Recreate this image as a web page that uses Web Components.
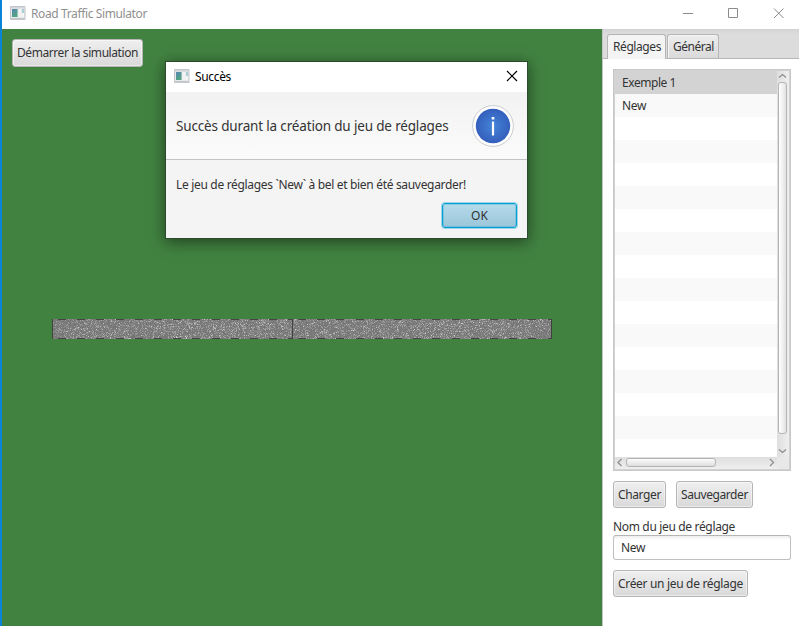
<!DOCTYPE html>
<html lang="fr">
<head>
<meta charset="utf-8">
<title>Road Traffic Simulator</title>
<style>
html,body{margin:0;width:799px;height:626px;overflow:hidden;background:#fff;font:12px/16px "Noto Sans","Open Sans",sans-serif;color:#333}
</style>
</head>
<body>
<traffic-app></traffic-app>
<script>
const define=(name,html,setup)=>customElements.define(name,class extends HTMLElement{
  connectedCallback(){
    if(this.shadowRoot)return;
    const t=document.createElement('template');
    t.innerHTML=html;
    this.attachShadow({mode:'open'}).append(t.content.cloneNode(true));
    if(setup)setup(this,this.shadowRoot);
  }
});

// Single-line label whose tracking is adjusted to fill the width given in "w".
define('fit-text','<style>:host{display:inline-block;white-space:pre;text-align:left}span{display:inline-block}</style><span></span>',(el,root)=>{
  const s=root.querySelector('span');
  s.textContent=el.getAttribute('text');
  const w=+el.getAttribute('w');
  const natural=s.getBoundingClientRect().width;
  s.style.letterSpacing=((w-natural)/s.textContent.length)+'px';
  el.style.width=w+'px';
});

define('app-icon',`<style>:host{display:block;width:16px;height:14px}svg{display:block}</style>
<svg width="16" height="14" viewBox="0 0 16 14"><defs><linearGradient id="g" x2=".4" y2="1"><stop stop-color="#5b86b0"/><stop offset="1" stop-color="#4fa583"/></linearGradient></defs>
<path d="M.5.5h14.500v12h-14.500z" fill="#e6e8ea" stroke="#c2c6ca"/><path d="M1 1h14v1.500H1z" fill="#d2d6da"/><path d="M0 13.500h15.500" stroke="#b8bbbe" stroke-width=".8"/><path d="M2 3h5.500v8H2z" fill="url(#g)"/><path d="M8.500 3h3v8h-3z" fill="#f3f3f3"/><path d="M12 3h2v4h-2z" fill="#a9cdd4"/><path d="M12 7h2v4h-2z" fill="#f5f6f6"/></svg>`);

define('fx-button',`<style>
:host{display:flex;box-sizing:border-box;height:27px;align-items:center;justify-content:center;border:1px solid #b5b5b5;border-radius:3px;background:linear-gradient(#efefef,#d9d9d9);box-shadow:inset 0 0 0 1px rgba(255,255,255,.45)}
:host([primary]){height:25px;border:1px solid #039ed3;background:linear-gradient(#b3dbeb,#9cc5d9);box-shadow:0 0 0 1px rgba(3,158,211,.35),inset 0 0 0 1px rgba(3,158,211,.25)}
</style><slot></slot>`);

define('window-controls',`<style>:host{display:block}svg{display:block}</style>
<svg width="112" height="28" viewBox="0 0 112 28" fill="none" stroke="#8b8b8b"><path d="M0 13.500h10M45.500 8.500h9v9h-9zM91 8.500l9.500 9.500M100.500 8.500L91 18"/></svg>`);

define('title-bar',`<style>:host{display:flex;height:29px;background:#fff;color:#8f8f8f;box-sizing:border-box;padding-left:8px}
app-icon{margin:6px 5px 0 0}fit-text{margin-top:6px}window-controls{margin-left:auto;margin-right:4px}</style>
<app-icon></app-icon><fit-text text="Road Traffic Simulator" w="116"></fit-text><window-controls></window-controls>`);

// Asphalt strip: two 20px-high tiles with dashed edges and a joint between them.
define('road-strip','<style>:host{display:block}canvas{display:block}</style><canvas width="500" height="20"></canvas>',(el,root)=>{
  const c=root.querySelector('canvas').getContext('2d');
  let seed=20731;
  const rnd=()=>{seed=(seed+0x6D2B79F5)|0;let t=Math.imul(seed^seed>>>15,1|seed);t=t+Math.imul(t^t>>>7,61|t)^t;return((t^t>>>14)>>>0)/4294967296};
  for(let y=0;y<20;y++)for(let x=0;x<500;x++){
    const r=rnd();
    const v=Math.round(r<.62?116+rnd()*10:r<.95?128+rnd()*36:165+rnd()*38);
    c.fillStyle=`rgb(${v},${v},${v})`;
    c.fillRect(x,y,1,1);
  }
  for(const [a,b] of [[0,240],[240,500]]){
    c.fillStyle='#454545';
    for(let x=6;a+x<b;x+=19.2){
      const w=Math.min(8,b-a-Math.round(x));
      c.fillRect(a+Math.round(x),0,w,1);c.fillRect(a+Math.round(x),19,w,1);
    }
  }
  c.fillStyle='#3c443c';
  c.fillRect(0,0,1,20);c.fillRect(240,0,1,20);c.fillRect(499,0,1,20);
});

define('simulation-view',`<style>:host{display:block;background:#418241;padding:10px;box-sizing:border-box}
fx-button{width:131px;height:28px}road-strip{margin:252px 0 0 40px}</style>
<fx-button><fit-text text="Démarrer la simulation" w="121"></fit-text></fx-button><road-strip></road-strip>`);

define('fx-tabs',`<style>
:host{display:flex;box-sizing:border-box;height:30px;padding:5px 0 0 4px;gap:1px;align-items:flex-start;border-bottom:1px solid #b5b5b5;background:linear-gradient(#d3d3d3,#dcdcdc 5px)}
div{box-sizing:border-box;height:24px;border:1px solid #b5b5b5;border-bottom:0;border-radius:3px 3px 0 0;background:linear-gradient(#ededed,#dadada);padding:4px 0 0 5px;box-shadow:inset 1px 1px #f4f4f4}
.on{background:#f4f4f4;height:25px;width:59px}.off{width:52px}
</style><div class="on"><fit-text text="Réglages" w="48"></fit-text></div><div class="off"><fit-text text="Général" w="41"></fit-text></div>`);

define('preset-list',`<style>
:host{display:grid;box-sizing:border-box;width:178px;height:402px;border:1px solid #c8c8c8;outline:1px solid #d2d2d2;outline-offset:-2px;padding:1px;grid-template:386px 1fr/162px 1fr;background:#e8e8e8}
.rows{overflow:hidden;background:repeating-linear-gradient(#fff 0 23px,#f9f9f9 23px 46px)}
.row{height:23px;box-sizing:border-box;padding:4px 0 0 7px}.sel{background:#d3d3d3}
.v,.h{display:flex;align-items:center}
.v{flex-direction:column;background:linear-gradient(90deg,#dedede,#efefef);padding-right:1px}.h{background:linear-gradient(#dedede,#efefef);padding-bottom:1px}
.thumb{box-sizing:border-box;border:1px solid #b4b4b4;border-radius:3px}
.v .thumb{width:9px;height:352px;background:linear-gradient(90deg,#fff,#e2e2e2)}
.h .thumb{height:9px;width:90px;background:linear-gradient(#fbfbfb,#dedede)}
svg{display:block;fill:none;stroke:#8c8c8c;stroke-width:1.200;flex:none}
.h svg:last-child{margin-left:auto}.v svg:last-child{margin-top:auto}
</style>
<div class="rows"><div class="row sel"><fit-text text="Exemple 1" w="54"></fit-text></div><div class="row" style="background:#f9f9f9"><fit-text text="New" w="24"></fit-text></div></div>
<div class="v"><svg width="9" height="11"><path d="M1 6.500l3.500-3 3.500 3"/></svg><div class="thumb"></div><svg width="9" height="11"><path d="M1 3.500l3.500 3 3.500-3"/></svg></div>
<div class="h"><svg width="11" height="9"><path d="M6.500 1L3 4.500l3.500 3.500"/></svg><div class="thumb"></div><svg width="11" height="9"><path d="M4 1l3.500 3.500-3.500 3.500"/></svg></div><div></div>`);

define('text-input',`<style>:host{display:block;box-sizing:border-box;width:178px;height:25px;padding:4px 0 0 7px;border:1px solid #c0c0c0;border-top-color:#b5b5b5;border-radius:3px;background:linear-gradient(#eee,#fff 4px)}</style><slot></slot>`);

define('settings-panel',`<style>
:host{display:block;background:#fff;border-left:1px solid #c4c4c4;box-sizing:border-box}
.body{padding:10px 8px 0 10px;display:flex;flex-direction:column}
.buttons{display:flex;gap:10px;margin-top:10px}
.label{margin-top:11px;height:16px}
text-input{margin-bottom:10px}
</style><fx-tabs></fx-tabs><div class="body"><preset-list></preset-list>
<div class="buttons"><fx-button style="width:53px"><fit-text text="Charger" w="43"></fit-text></fx-button><fx-button style="width:77px"><fit-text text="Sauvegarder" w="67"></fit-text></fx-button></div>
<div class="label"><fit-text text="Nom du jeu de réglage" w="122"></fit-text></div>
<text-input><fit-text text="New" w="24"></fit-text></text-input>
<fx-button style="width:135px"><fit-text text="Créer un jeu de réglage" w="125"></fit-text></fx-button></div>`);

define('info-badge',`<style>:host{display:block}svg{display:block}</style>
<svg width="42" height="42" viewBox="0 0 42 42"><defs><radialGradient id="b"><stop stop-color="#4585da"/><stop offset="1" stop-color="#345fbc"/></radialGradient></defs>
<circle cx="21" cy="21" r="20.400" fill="#fff" stroke="#ccc"/><circle cx="21" cy="21" r="17.200" fill="url(#b)"/><path d="M19.700 12h2.600v2.400h-2.600zM19.900 16.500h2.200v14h-2.200z" fill="#fff"/></svg>`);

define('success-dialog',`<style>
:host{display:block;box-sizing:border-box;width:363px;height:178px;border:1px solid #2d4a2d;background:#f4f4f4;box-shadow:0 3px 14px rgba(0,0,0,.5)}
.title{display:flex;height:30px;background:#fff;color:#000;padding-left:8px}
.title app-icon{margin:7px 5px 0 0}.title fit-text{margin-top:7px}.title svg{margin:8px 9px 0 auto}
.head{display:flex;height:68px;box-sizing:border-box;border-bottom:1px solid #c4c4c4;background:linear-gradient(#f2f2f2,#fbfbfb);padding:13px 13px 0 10px;justify-content:space-between;font-size:13.500px;line-height:20px}
.head fit-text{margin-top:11px}
.content{padding:17px 0 0 10px;height:26px}
.foot{display:flex;justify-content:flex-end;padding-right:10px}
fx-button{width:75px}
</style><div class="title"><app-icon></app-icon><fit-text text="Succès" w="36"></fit-text><svg width="12" height="12"><path d="M1 1l10 10M11 1L1 11" stroke="#000" stroke-width="1.200"/></svg></div>
<div class="head"><fit-text text="Succès durant la création du jeu de réglages" w="272.500"></fit-text><info-badge></info-badge></div>
<div class="content"><fit-text text="Le jeu de réglages \`New\` à bel et bien été sauvegarder!" w="290"></fit-text></div>
<div class="foot"><fx-button primary><fit-text text="OK" w="17"></fit-text></fx-button></div>`);

define('traffic-app',`<style>
:host{display:grid;position:relative;box-sizing:border-box;width:799px;height:626px;border-left:2px solid #0a84d8;grid-template:29px 1fr/600px 1fr;overflow:hidden}
title-bar{grid-column:1/3}
success-dialog{position:absolute;left:163px;top:61px}
</style><title-bar></title-bar><simulation-view></simulation-view><settings-panel></settings-panel><success-dialog></success-dialog>`);
</script>
</body>
</html>
